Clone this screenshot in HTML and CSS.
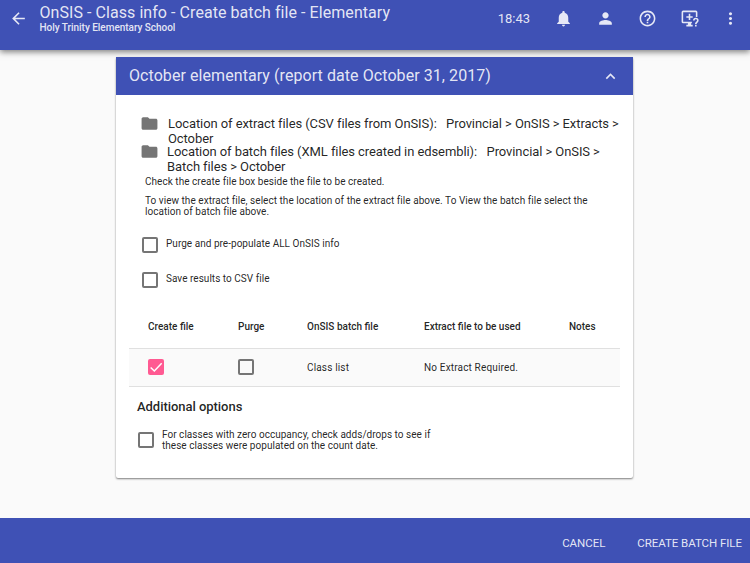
FILE: index.html
```html
<!DOCTYPE html>
<html lang="en">
<head>
<meta charset="utf-8">
<title>OnSIS - Class info - Create batch file - Elementary</title>
<link rel="stylesheet" href="styles.css">
</head>
<body>
<header class="toolbar">
  <svg class="back" viewBox="0 0 24 24"><path d="M20 11H7.83l5.59-5.59L12 4l-8 8 8 8 1.41-1.41L7.83 13H20v-2z"/></svg>
  <div class="titles">
    <h1><span>OnSIS - Class info - Create batch file - Elementary</span></h1>
    <p><span>Holy Trinity Elementary School</span></p>
  </div>
  <div class="actions">
    <span class="clock">18:43</span>
    <svg viewBox="0 0 24 24"><path d="M12 22c1.1 0 2-.9 2-2h-4c0 1.1.89 2 2 2zm6-6v-5c0-3.07-1.64-5.64-4.5-6.32V4c0-.83-.67-1.5-1.5-1.5s-1.5.67-1.5 1.5v.68C7.63 5.36 6 7.92 6 11v5l-2 2v1h16v-1l-2-2z"/></svg>
    <svg viewBox="0 0 24 24"><path d="M12 12c2.21 0 4-1.79 4-4s-1.79-4-4-4-4 1.790-4 4 1.790 4 4 4zm0 2c-2.670 0-8 1.340-8 4v2h16v-2c0-2.660-5.330-4-8-4z"/></svg>
    <svg viewBox="0 0 24 24"><path d="M11 18h2v-2h-2v2zm1-16C6.480 2 2 6.480 2 12s4.480 10 10 10 10-4.480 10-10S17.520 2 12 2zm0 18c-4.410 0-8-3.590-8-8s3.590-8 8-8 8 3.590 8 8-3.590 8-8 8zm0-14c-2.210 0-4 1.790-4 4h2c0-1.100.9-2 2-2s2 .9 2 2c0 2-3 1.750-3 5h2c0-2.250 3-2.500 3-5 0-2.210-1.790-4-4-4z"/></svg>
    <svg viewBox="0 0 24 24"><path d="M4 2h16a2 2 0 0 1 2 2v6h-2V4H4v12h11v2h-1v2h2v2H8v-2h2v-2H4a2 2 0 0 1-2-2V4a2 2 0 0 1 2-2zM11 6h2v3h3v2h-3v3h-2v-3H8V9h3zM20 11a3.500 3.500 0 0 0-3.500 3.500h2a1.500 1.500 0 1 1 2.600 1c-1.100 1-2.100 1.700-2.100 3.500h2c0-1.500 2.500-2.200 2.500-4.500A3.500 3.500 0 0 0 20 11zM19 20h2v2h-2z"/></svg>
    <svg viewBox="0 0 24 24"><path d="M12 8c1.100 0 2-.9 2-2s-.9-2-2-2-2 .9-2 2 .9 2 2 2zm0 2c-1.100 0-2 .9-2 2s.9 2 2 2 2-.9 2-2-.9-2-2-2zm0 6c-1.100 0-2 .9-2 2s.9 2 2 2 2-.9 2-2-.9-2-2-2z"/></svg>
  </div>
</header>
<main>
  <section class="card">
    <div class="card-head">
      <h2>October elementary (report date October 31, 2017)</h2>
      <svg viewBox="0 0 24 24"><path d="M12 8l-6 6 1.410 1.410L12 10.830l4.590 4.580L18 14z"/></svg>
    </div>
    <div class="card-body">
      <div class="location extract">
        <svg viewBox="0 0 24 24"><path d="M10 4H4c-1.100 0-1.990.9-1.990 2L2 18c0 1.100.9 2 2 2h16c1.100 0 2-.9 2-2V8c0-1.100-.9-2-2-2h-8l-2-2z"/></svg>
        <p>Location of extract files (CSV files from OnSIS): &nbsp; Provincial &gt; OnSIS &gt; Extracts &gt;<br>October</p>
      </div>
      <div class="location batch">
        <svg viewBox="0 0 24 24"><path d="M10 4H4c-1.100 0-1.990.9-1.990 2L2 18c0 1.100.9 2 2 2h16c1.100 0 2-.9 2-2V8c0-1.100-.9-2-2-2h-8l-2-2z"/></svg>
        <p>Location of batch files (XML files created in edsembli): &nbsp; Provincial &gt; OnSIS &gt;<br>Batch files &gt; October</p>
      </div>
      <div class="help">
        <p>Check the create file box beside the file to be created.</p>
        <p>To view the extract file, select the location of the extract file above. To View the batch file select the<br>location of batch file above.</p>
      </div>
      <label class="option"><i class="box"></i><span>Purge and pre-populate ALL OnSIS info</span></label>
      <label class="option"><i class="box"></i><span>Save results to CSV file</span></label>
      <div class="table">
        <div class="row head"><span>Create file</span><span>Purge</span><span>OnSIS batch file</span><span>Extract file to be used</span><span>Notes</span></div>
        <div class="row data">
          <span><i class="box checked"><svg viewBox="0 0 24 24"><path d="M4 12.700l5.500 5.300L20.500 6.500"/></svg></i></span>
          <span><i class="box"></i></span>
          <span class="txt">Class list</span>
          <span class="txt">No Extract Required.</span>
          <span></span>
        </div>
      </div>
      <h3>Additional options</h3>
      <label class="option zero"><i class="box"></i><span>For classes with zero occupancy, check adds/drops to see if<br>these classes were populated on the count date.</span></label>
    </div>
  </section>
</main>
<footer>
  <span class="cancel">CANCEL</span>
  <span class="create">CREATE BATCH FILE</span>
</footer>
</body>
</html>
```
FILE: styles.css
```css
* { box-sizing: border-box; margin: 0; padding: 0; }
body {
  display: flex;
  flex-direction: column;
  height: 563px;
  overflow: hidden;
  background: #fafafa;
  color: rgba(0, 0, 0, .87);
  font-family: Roboto, "Liberation Sans", sans-serif;
  font-size: 10px;
  white-space: nowrap;
}
svg { display: block; flex: none; fill: currentColor; }
.toolbar {
  display: flex;
  flex: none;
  height: 50px;
  padding: 0 10px 0 9px;
  background: #3f51b5;
  color: rgba(255, 255, 255, .87);
  box-shadow: 0 2px 6px rgba(0, 0, 0, .5);
}
.back { width: 19px; height: 19px; margin-top: 9px; }
.titles { flex: 1; margin-left: 11.500px; padding-top: 3px; }
h1 { font-size: 16px; font-weight: 400; line-height: 20px; letter-spacing: .06px; }
.titles p { font-size: 10px; font-weight: 500; line-height: 10px; letter-spacing: -.03px; }
.actions { display: flex; align-items: center; height: 37px; }
.actions svg { width: 19px; height: 19px; margin-left: 23px; }
.actions svg:nth-of-type(1) { margin-left: 24px; }
.actions svg:last-child { margin-left: 22px; }
.clock { font-size: 13px; }
main { flex: 1; padding: 7px 117px 0 116px; }
.card {
  height: 421px;
  background: #fff;
  border-radius: 2px;
  box-shadow: 0 1px 2px rgba(0, 0, 0, .5);
}
.card-head {
  display: flex;
  align-items: center;
  justify-content: space-between;
  height: 38px;
  padding: 0 13px;
  background: #3f51b5;
  color: rgba(255, 255, 255, .87);
}
h2 { font-size: 16px; font-weight: 400; line-height: 20px; letter-spacing: .07px; }
.card-head svg { width: 19px; height: 19px; }
.card-body { padding: 21px 13px 0; }
.location {
  display: flex;
  height: 28px;
  padding-left: 11px;
  font-size: 13px;
  line-height: 15px;
  letter-spacing: -.085px;
}
.location svg { width: 19px; height: 19px; margin-top: -2px; color: #757575; }
.extract p { margin-left: 9px; }
.batch p { margin-left: 8px; }
.help { padding: 4px 0 0 16px; line-height: 11px; letter-spacing: .04px; }
.help p + p { margin-top: 8px; }
.option { display: flex; height: 35px; padding-left: 13px; letter-spacing: .03px; }
.help + .option { margin-top: 20px; }
.box {
  display: block;
  flex: none;
  width: 16px;
  height: 16px;
  border: 2px solid #757575;
  border-radius: 2px;
}
.option span { margin: 1px 0 0 8px; line-height: 11px; }
.checked { border: 0; background: #ff5a92; }
.checked svg { width: 16px; height: 16px; fill: none; stroke: #fff; stroke-width: 2.2; }
.row { display: grid; grid-template-columns: 90px 69px 117px 145px 1fr; align-items: center; padding-left: 19px; }
.head { height: 41px; padding-bottom: 3px; font-weight: 500; }
.data { height: 39px; padding-bottom: 1px; background: #fafafa; border: solid #e0e0e0; border-width: 1px 0; }
.txt { letter-spacing: .16px; }
h3 { margin: 12px 0 0 8px; font-size: 13px; font-weight: 500; line-height: 16px; letter-spacing: -.04px; }
.zero { margin-top: 17px; padding-left: 9px; }
.zero span { margin-top: -3px; }
footer {
  display: flex;
  flex: none;
  justify-content: flex-end;
  gap: 32px;
  height: 45px;
  padding-right: 8px;
  background: #3f51b5;
  color: rgba(255, 255, 255, .87);
  font-size: 11.500px;
  font-weight: 400;
  line-height: 50px;
  letter-spacing: -.05px;
}
```
